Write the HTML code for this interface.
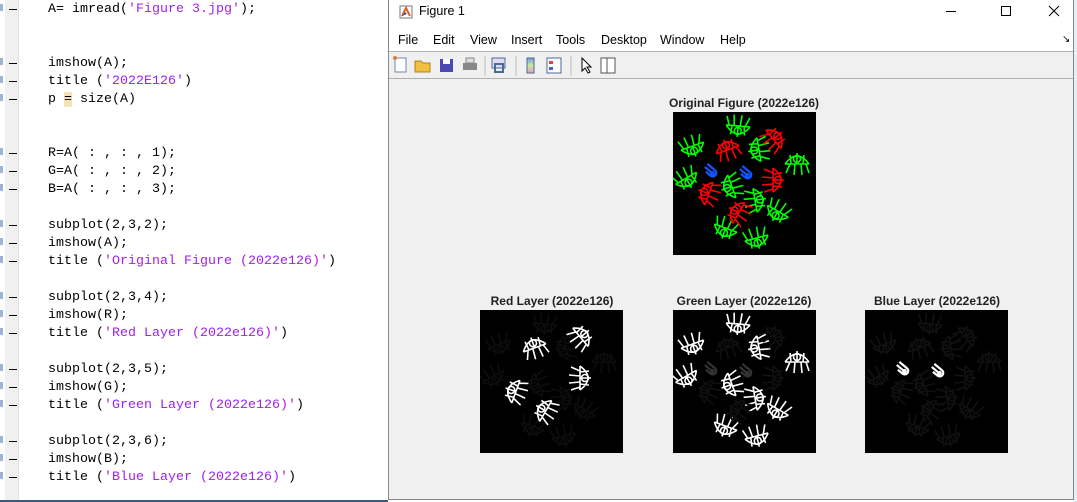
<!DOCTYPE html>
<html><head><meta charset="utf-8"><style>
*{margin:0;padding:0;box-sizing:border-box}
body{width:1077px;height:502px;overflow:hidden;background:#fff;position:relative;font-family:"Liberation Sans",sans-serif}
#gut{position:absolute;left:0;top:0;width:19px;height:502px;background:#f0f0f0;border-right:1px solid #e4e4e4}
#nums{position:absolute;left:0;top:0;width:5px;height:502px;background:#fff}
.l{position:absolute;left:48px;font-family:"Liberation Mono",monospace;font-size:13.33px;color:#000;white-space:pre;line-height:18px;margin-top:1px}
.s{color:#a020f0}
.d{position:absolute;left:9px;width:8px;height:1px;background:#000;margin-top:1px}
.n{position:absolute;left:0;width:3px;height:7px;background:#5a80b8;opacity:.6}
#win{position:absolute;left:388px;top:0;width:686px;height:500px;background:#f0f0f0;border:1px solid #888;border-top:none}
#tb{position:absolute;left:0;top:0;width:100%;height:52px;background:#fff;border-bottom:1px solid #b0b0b0}
.m{position:absolute;top:33px;font-size:12.5px;color:#000}
#tools{position:absolute;left:0;top:53px;width:100%;height:26px;background:#f0f0f0;border-bottom:1px solid #b0b0b0}
.t{position:absolute;font-weight:bold;font-size:12px;color:#222;text-align:center;width:200px}
.img{position:absolute;width:143px;height:143px;background:#000}
</style></head><body>
<div id="gut"></div><div id="nums"></div>
<div class="n" style="top:4px"></div><div class="n" style="top:58px"></div><div class="n" style="top:76px"></div><div class="n" style="top:94px"></div><div class="n" style="top:148px"></div><div class="n" style="top:166px"></div><div class="n" style="top:184px"></div><div class="n" style="top:220px"></div><div class="n" style="top:238px"></div><div class="n" style="top:256px"></div><div class="n" style="top:292px"></div><div class="n" style="top:310px"></div><div class="n" style="top:328px"></div><div class="n" style="top:364px"></div><div class="n" style="top:382px"></div><div class="n" style="top:400px"></div><div class="n" style="top:436px"></div><div class="n" style="top:454px"></div><div class="n" style="top:472px"></div>
<div class="d" style="top:8px"></div><div class="d" style="top:62px"></div><div class="d" style="top:80px"></div><div class="d" style="top:98px"></div><div class="d" style="top:152px"></div><div class="d" style="top:170px"></div><div class="d" style="top:188px"></div><div class="d" style="top:224px"></div><div class="d" style="top:242px"></div><div class="d" style="top:260px"></div><div class="d" style="top:296px"></div><div class="d" style="top:314px"></div><div class="d" style="top:332px"></div><div class="d" style="top:368px"></div><div class="d" style="top:386px"></div><div class="d" style="top:404px"></div><div class="d" style="top:440px"></div><div class="d" style="top:458px"></div><div class="d" style="top:476px"></div>
<div class="l" style="top:0px">A= imread(<span class="s">'Figure 3.jpg'</span>);</div>
<div class="l" style="top:54px">imshow(A);</div>
<div class="l" style="top:72px">title (<span class="s">'2022E126'</span>)</div>
<div class="l" style="top:90px">p <span style="background:#f3e3b5">=</span> size(A)</div>
<div class="l" style="top:144px">R=A( : , : , 1);</div>
<div class="l" style="top:162px">G=A( : , : , 2);</div>
<div class="l" style="top:180px">B=A( : , : , 3);</div>
<div class="l" style="top:216px">subplot(2,3,2);</div>
<div class="l" style="top:234px">imshow(A);</div>
<div class="l" style="top:252px">title (<span class="s">'Original Figure (2022e126)'</span>)</div>
<div class="l" style="top:288px">subplot(2,3,4);</div>
<div class="l" style="top:306px">imshow(R);</div>
<div class="l" style="top:324px">title (<span class="s">'Red Layer (2022e126)'</span>)</div>
<div class="l" style="top:360px">subplot(2,3,5);</div>
<div class="l" style="top:378px">imshow(G);</div>
<div class="l" style="top:396px">title (<span class="s">'Green Layer (2022e126)'</span>)</div>
<div class="l" style="top:432px">subplot(2,3,6);</div>
<div class="l" style="top:450px">imshow(B);</div>
<div class="l" style="top:468px">title (<span class="s">'Blue Layer (2022e126)'</span>)</div>
<div style="position:absolute;left:0;top:500px;width:388px;height:2px;background:#3a5a80"></div>
<div style="position:absolute;left:1074px;top:0;width:3px;height:502px;background:#e8eef5"></div>

<svg width="0" height="0" style="position:absolute"><defs>
<g id="f" fill="none" stroke-width="1.6"><path d="M-12,-2 L12,-2 M-9,-2 L-12,-11 M-4,-2 L-5,-13 M2,-2 L3,-13 M7,-2 L11,-11 M0,-2 L0,9 M-6,-2 L-7,7 M6,-2 L7,7 M-12,-2 Q0,14 12,-2"/><circle cx="0" cy="3" r="3.5"/></g>
<g id="p" fill="none" stroke-width="2.2"><path d="M-6,-3 L4,-3 A3.5,3.5 0 0 1 4,4 L-2,4 M-6,1 L2,1"/><circle cx="4" cy="1" r="1.3"/></g>
</defs></svg>

<div id="win">
<div id="tb">
<svg style="position:absolute;left:10px;top:5px" width="14" height="14"><rect x="1" y="1" width="12" height="12" fill="#fff" stroke="#777"/><path d="M3,11 L7,3 L11,11" stroke="#e06020" fill="none" stroke-width="2"/><path d="M3,11 L6,7 L8,9 Z" fill="#2060c0"/></svg>
<div style="position:absolute;left:30px;top:4px;font-size:12.5px">Figure 1</div>
<div style="position:absolute;left:557px;top:11px;width:10px;height:1px;background:#000"></div>
<div style="position:absolute;left:612px;top:6px;width:10px;height:10px;border:1px solid #000"></div>
<svg style="position:absolute;left:659px;top:5px" width="12" height="12"><path d="M1,1 L11,11 M11,1 L1,11" stroke="#000"/></svg>
<span class="m" style="left:9px">File</span><span class="m" style="left:44px">Edit</span><span class="m" style="left:81px">View</span><span class="m" style="left:122px">Insert</span><span class="m" style="left:167px">Tools</span><span class="m" style="left:212px">Desktop</span><span class="m" style="left:271px">Window</span><span class="m" style="left:331px">Help</span>
<span style="position:absolute;left:673px;top:34px;font-size:10px">↘</span>
</div>
<div id="tools">
<svg width="260" height="26" style="position:absolute;left:0;top:0">
<rect x="6" y="5" width="11" height="14" fill="#fff" stroke="#6a8ab0"/><circle cx="6" cy="5" r="2" fill="#e87a3a"/>
<path d="M26,8 L32,8 L34,10 L41,10 L41,19 L26,19 Z" fill="#f0c040" stroke="#b08020"/>
<rect x="51" y="6" width="13" height="13" fill="#4a4ab0"/><rect x="54" y="6" width="7" height="5" fill="#fff"/>
<rect x="74" y="10" width="14" height="7" fill="#888"/><rect x="77" y="5" width="8" height="5" fill="#ddd" stroke="#888"/>
<line x1="96" y1="3" x2="96" y2="23" stroke="#bbb"/>
<rect x="103" y="5" width="13" height="10" fill="#dde" stroke="#4a6a9a"/><rect x="106" y="11" width="8" height="8" fill="none" stroke="#4a6a9a" stroke-width="2"/>
<line x1="127" y1="3" x2="127" y2="23" stroke="#bbb"/>
<defs><linearGradient id="cb" x1="0" y1="0" x2="0" y2="1"><stop offset="0" stop-color="#6aa0e0"/><stop offset=".5" stop-color="#d0e8a0"/><stop offset="1" stop-color="#e0a0c0"/></linearGradient></defs>
<rect x="138" y="5" width="7" height="15" fill="url(#cb)" stroke="#4a6a9a"/>
<rect x="158" y="5" width="14" height="15" fill="#fff" stroke="#4a6a9a"/><rect x="160" y="8" width="4" height="3" fill="#e04040"/><rect x="160" y="14" width="4" height="3" fill="#4060e0"/>
<line x1="182" y1="3" x2="182" y2="23" stroke="#bbb"/>
<path d="M193,5 L193,18 L196,15 L199,20 L201,19 L198,14 L202,14 Z" fill="#fff" stroke="#000"/>
<rect x="212" y="5" width="14" height="15" fill="#fff" stroke="#555"/><line x1="218" y1="5" x2="218" y2="20" stroke="#555"/>
</svg>
</div>

<div class="t" style="left:255px;top:96px">Original Figure (2022e126)</div>
<div class="t" style="left:63px;top:294px">Red Layer (2022e126)</div>
<div class="t" style="left:255px;top:294px">Green Layer (2022e126)</div>
<div class="t" style="left:448px;top:294px">Blue Layer (2022e126)</div>

<svg class="img" style="left:284px;top:112px" viewBox="0 0 143 143">
<g stroke="#0f0"><use href="#f" transform="translate(65,16) rotate(5)"/><use href="#f" transform="translate(20,36) rotate(-20)"/><use href="#f" transform="translate(84,38) rotate(80)"/><use href="#f" transform="translate(124,50) rotate(180)"/><use href="#f" transform="translate(14,68) rotate(-30)"/><use href="#f" transform="translate(57,75) rotate(70)"/><use href="#f" transform="translate(84,88) rotate(-100)"/><use href="#f" transform="translate(104,101) rotate(30)"/><use href="#f" transform="translate(52,118) rotate(20)"/><use href="#f" transform="translate(84,128) rotate(-15)"/></g>
<g stroke="#f00"><use href="#f" transform="translate(102,26) rotate(-130)"/><use href="#f" transform="translate(54,36) rotate(160)"/><use href="#f" transform="translate(102,68) rotate(-90)"/><use href="#f" transform="translate(34,81) rotate(110)"/><use href="#f" transform="translate(64,100) rotate(120)"/></g>
<g stroke="#15f"><use href="#p" transform="translate(37,58) rotate(40)"/><use href="#p" transform="translate(72,60) rotate(40)"/></g>
</svg>

<svg class="img" style="left:91px;top:310px" viewBox="0 0 143 143">
<g stroke="#0d0d0d"><use href="#f" transform="translate(65,16) rotate(5)"/><use href="#f" transform="translate(20,36) rotate(-20)"/><use href="#f" transform="translate(84,38) rotate(80)"/><use href="#f" transform="translate(124,50) rotate(180)"/><use href="#f" transform="translate(14,68) rotate(-30)"/><use href="#f" transform="translate(57,75) rotate(70)"/><use href="#f" transform="translate(84,88) rotate(-100)"/><use href="#f" transform="translate(104,101) rotate(30)"/><use href="#f" transform="translate(52,118) rotate(20)"/><use href="#f" transform="translate(84,128) rotate(-15)"/></g>
<g stroke="#fff"><use href="#f" transform="translate(102,26) rotate(-130)"/><use href="#f" transform="translate(54,36) rotate(160)"/><use href="#f" transform="translate(102,68) rotate(-90)"/><use href="#f" transform="translate(34,81) rotate(110)"/><use href="#f" transform="translate(64,100) rotate(120)"/></g>
</svg>

<svg class="img" style="left:284px;top:310px" viewBox="0 0 143 143">
<g stroke="#fff"><use href="#f" transform="translate(65,16) rotate(5)"/><use href="#f" transform="translate(20,36) rotate(-20)"/><use href="#f" transform="translate(84,38) rotate(80)"/><use href="#f" transform="translate(124,50) rotate(180)"/><use href="#f" transform="translate(14,68) rotate(-30)"/><use href="#f" transform="translate(57,75) rotate(70)"/><use href="#f" transform="translate(84,88) rotate(-100)"/><use href="#f" transform="translate(104,101) rotate(30)"/><use href="#f" transform="translate(52,118) rotate(20)"/><use href="#f" transform="translate(84,128) rotate(-15)"/></g>
<g stroke="#101010"><use href="#f" transform="translate(102,26) rotate(-130)"/><use href="#f" transform="translate(54,36) rotate(160)"/><use href="#f" transform="translate(102,68) rotate(-90)"/><use href="#f" transform="translate(34,81) rotate(110)"/><use href="#f" transform="translate(64,100) rotate(120)"/></g>
<g stroke="#333"><use href="#p" transform="translate(37,58) rotate(40)"/><use href="#p" transform="translate(72,60) rotate(40)"/></g>
</svg>

<svg class="img" style="left:476px;top:310px" viewBox="0 0 143 143">
<g stroke="#111"><use href="#f" transform="translate(65,16) rotate(5)"/><use href="#f" transform="translate(20,36) rotate(-20)"/><use href="#f" transform="translate(84,38) rotate(80)"/><use href="#f" transform="translate(124,50) rotate(180)"/><use href="#f" transform="translate(14,68) rotate(-30)"/><use href="#f" transform="translate(57,75) rotate(70)"/><use href="#f" transform="translate(84,88) rotate(-100)"/><use href="#f" transform="translate(104,101) rotate(30)"/><use href="#f" transform="translate(52,118) rotate(20)"/><use href="#f" transform="translate(84,128) rotate(-15)"/><use href="#f" transform="translate(102,26) rotate(-130)"/><use href="#f" transform="translate(54,36) rotate(160)"/><use href="#f" transform="translate(102,68) rotate(-90)"/><use href="#f" transform="translate(34,81) rotate(110)"/><use href="#f" transform="translate(64,100) rotate(120)"/></g>
<g stroke="#fff"><use href="#p" transform="translate(37,58) rotate(40)"/><use href="#p" transform="translate(72,60) rotate(40)"/></g>
</svg>
</div>
</body></html>
